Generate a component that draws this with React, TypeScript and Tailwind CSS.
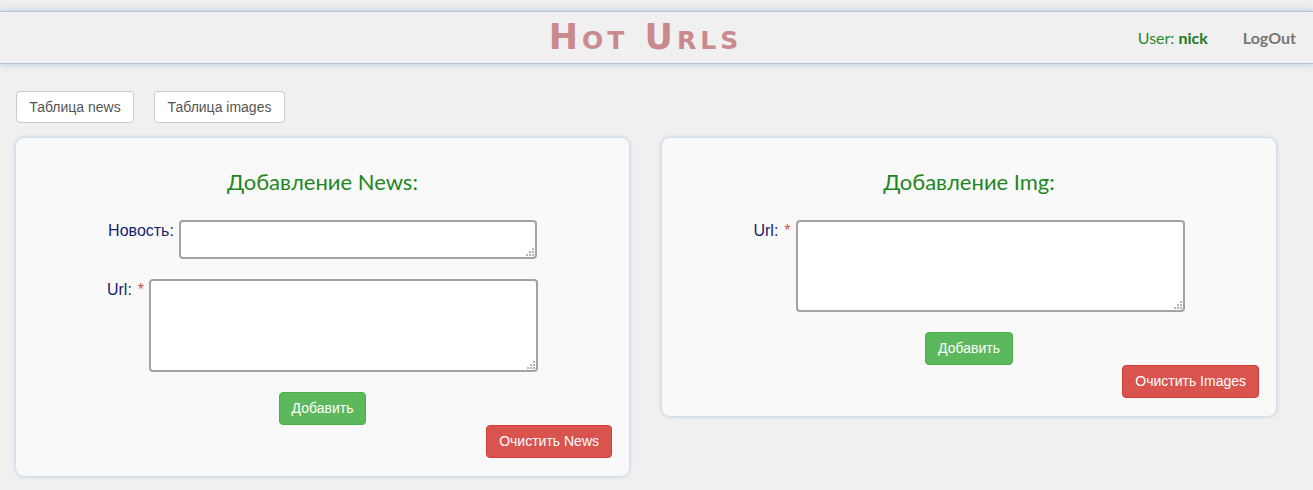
import React from 'react';

const arial = { fontFamily: '"Liberation Sans", Arial, sans-serif' };
const calibri = { fontFamily: 'Lato, "Open Sans", sans-serif' };

// IE-style dotted resize grip
const Grip = () => (
  <svg className="absolute right-[3px] bottom-[3px]" width="9" height="9" viewBox="0 0 9 9">
    {[
      [7, 1],
      [4, 4], [7, 4],
      [1, 7], [4, 7], [7, 7],
    ].map(([x, y]) => (
      <rect key={`${x}-${y}`} x={x} y={y} width="2" height="2" fill="#b5b5b5" />
    ))}
  </svg>
);

const Field: React.FC<{ label: string; required?: boolean; width: string; height: string }> = ({ label, required, width, height }) => (
  <div className="flex items-start justify-center">
    <label className="pt-px text-[16px] leading-5 text-[#1c1c6e] mr-[5px] whitespace-nowrap" style={arial}>
      {label}
      {required && <span className="ml-[6px] text-[#d9534f]">*</span>}
    </label>
    <div className="relative">
      <textarea className={`${width} ${height} bg-white border-2 border-[#a3a3a3] rounded-[4px] block resize-none`} />
      <Grip />
    </div>
  </div>
);

const FormCard: React.FC<{
  title: string;
  width: string;
  clearLabel: string;
  children: React.ReactNode;
}> = ({ title, width, clearLabel, children }) => (
  <div className={`${width} bg-[#f9f9f9] rounded-[8px] shadow-[0_0_4px_rgba(110,160,210,0.55)] px-[17px] pt-[31px] pb-[18px]`}>
    <h2 className="text-center text-[22px] leading-[26px] text-[#1f861f]" style={calibri}>
      {title}
    </h2>
    <div className="mt-[25px] flex flex-col gap-[20px]">{children}</div>
    <div className="mt-[20px] flex justify-center">
      <button className="h-[33px] px-[12px] bg-[#5cb85c] border border-[#4cae4c] rounded-[4px] text-white text-[14px]" style={arial}>
        Добавить
      </button>
    </div>
    <div className="flex justify-end">
      <button className="h-[33px] px-[12px] bg-[#d9534f] border border-[#d43f3a] rounded-[4px] text-white text-[14px]" style={arial}>
        {clearLabel}
      </button>
    </div>
  </div>
);

export default function App() {
  return (
    <div className="min-h-screen bg-[#f0f0f0] pt-[11px]">
      <header className="h-[53px] bg-[#f0f0f0] border-y border-[#b6c6d6] shadow-[0_0_7px_rgba(130,170,210,0.6)] grid grid-cols-[1fr_auto_1fr] items-center">
        <div />
        <h1
          className="mr-[22px] text-[35px] leading-none font-bold tracking-[4px] text-[#c98a8e]"
          style={{ fontFamily: '"DejaVu Sans", Verdana, sans-serif', fontVariant: 'small-caps' }}
        >
          Hot Urls
        </h1>
        <div className="flex justify-end items-center pr-[17px] text-[16px]" style={calibri}>
          <span className="text-[#2a8a2a]">
            User: <b className="text-[#1f7a1f]">nick</b>
          </span>
          <span className="ml-[35px] font-bold text-[#777]">LogOut</span>
        </div>
      </header>

      <div className="px-4 pt-[27px] flex gap-[20px]" style={arial}>
        <button className="h-[32px] w-[118px] bg-white border border-[#ccc] rounded-[4px] text-[14px] text-[#555]">Таблица news</button>
        <button className="h-[32px] w-[131px] bg-white border border-[#ccc] rounded-[4px] text-[14px] text-[#555]">Таблица images</button>
      </div>

      <div className="px-4 pt-[15px] pb-[14px] flex items-start gap-[33px]">
        <FormCard title="Добавление News:" width="w-[613px]" clearLabel="Очистить News">
          <Field label="Новость:" width="w-[358px]" height="h-[39px]" />
          <Field label="Url:" required width="w-[389px]" height="h-[93px]" />
        </FormCard>
        <FormCard title="Добавление Img:" width="w-[614px]" clearLabel="Очистить Images">
          <Field label="Url:" required width="w-[389px]" height="h-[92px]" />
        </FormCard>
      </div>
    </div>
  );
}
